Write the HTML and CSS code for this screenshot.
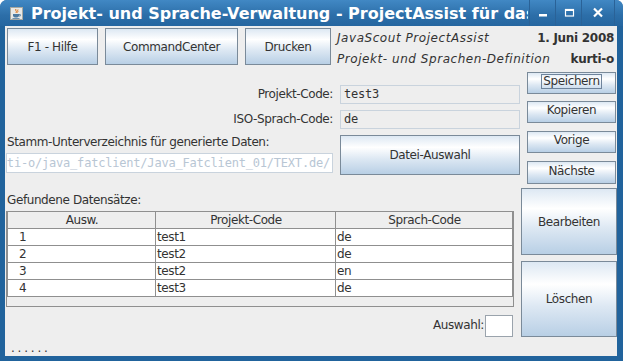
FILE: index.html
```html
<!DOCTYPE html>
<html lang="de">

<head>
  <meta charset="UTF-8" />
  <title>Projekt- und Sprache-Verwaltung</title>
  <link rel="stylesheet" href="styles.css">
</head>

<body>
  <div class="window">
    <div class="titlebar">
      <svg class="app-icon" width="13" height="13" viewBox="0 0 13 13">
        <rect x="0.5" y="0.5" width="12" height="12" fill="#e9e9e6" stroke="#a8a8a0" />
        <path d="M6 2 C4.5 3.5 7.5 4 6 6 M8 2.5 C7 3.5 8.5 4 7.5 5.5" fill="none" stroke="#e07010" stroke-width="1" />
        <path d="M3 7 H9 V8.5 C9 10 7.5 10.5 6 10.5 C4.5 10.5 3 10 3 8.5 Z" fill="#4d7aa0" />
        <path d="M9 7.5 H10.3 V9 H9" fill="none" stroke="#4d7aa0" stroke-width="0.8" />
        <path d="M2.5 11.5 H9.5" stroke="#4d7aa0" stroke-width="0.8" />
      </svg>
      <div class="title">Projekt- und Sprache-Verwaltung - ProjectAssist für das Erstellen von Anwendungen</div>
      <div class="controls">
        <div class="ctl">
          <svg width="12" height="12" viewBox="0 0 12 12"><rect x="2" y="7" width="8" height="2.5" fill="#fff" /></svg>
        </div>
        <div class="ctl">
          <svg width="12" height="12" viewBox="0 0 12 12"><rect x="2.5" y="2.5" width="8" height="6.5" fill="none" stroke="#fff" stroke-width="1.2" /><rect x="2" y="2" width="9" height="2" fill="#fff" /></svg>
        </div>
        <div class="ctl">
          <svg width="12" height="12" viewBox="0 0 12 12"><path d="M2 1.5 L10 9.5 M10 1.5 L2 9.5" stroke="#fff" stroke-width="2.2" /></svg>
        </div>
      </div>
    </div>

    <div class="content">
      <div class="toolbar">
        <button class="btn btn-help">F1 - Hilfe</button>
        <button class="btn btn-cc">CommandCenter</button>
        <button class="btn btn-print">Drucken</button>
        <div class="info">
          <div class="info-line"><span class="app">JavaScout ProjectAssist</span><b>1. Juni 2008</b></div>
          <div class="info-line"><span class="app">Projekt- und Sprachen-Definition</span><b>kurti-o</b></div>
        </div>
      </div>

      <div class="body">
        <div class="main">
          <div class="field-row first">
            <label class="field-label">Projekt-Code:</label>
            <div class="field readonly">test3</div>
          </div>
          <div class="field-row">
            <label class="field-label">ISO-Sprach-Code:</label>
            <div class="field readonly">de</div>
          </div>
          <div class="file-row">
            <div class="dir">
              <label class="dir-label">Stamm-Unterverzeichnis für generierte Daten:</label>
              <div class="field dir-field"><span>/home/kurti-o/java_fatclient/Java_Fatclient_01/TEXT.de/</span></div>
            </div>
            <button class="btn btn-file">Datei-Auswahl</button>
          </div>
          <div class="list-label">Gefundene Datensätze:</div>
          <div class="table-scroll">
            <table class="records">
              <thead>
                <tr><th>Ausw.</th><th>Projekt-Code</th><th>Sprach-Code</th></tr>
              </thead>
              <tbody>
                <tr><td class="num">1</td><td>test1</td><td>de</td></tr>
                <tr><td class="num">2</td><td>test2</td><td>de</td></tr>
                <tr><td class="num">3</td><td>test2</td><td>en</td></tr>
                <tr><td class="num">4</td><td>test3</td><td>de</td></tr>
              </tbody>
            </table>
          </div>
          <div class="select-row">
            <label>Auswahl:</label>
            <div class="select-field"></div>
          </div>
        </div>

        <div class="side">
          <button class="btn side-btn save"><span class="focus">Speichern</span></button>
          <button class="btn side-btn copy">Kopieren</button>
          <button class="btn side-btn prev">Vorige</button>
          <button class="btn side-btn next">Nächste</button>
          <button class="btn big-btn edit">Bearbeiten</button>
          <button class="btn big-btn delete">Löschen</button>
        </div>
      </div>

      <div class="status">......</div>
    </div>
  </div>
</body>

</html>
```

FILE: styles.css
```css
body {
  margin: 0;
  background-color: #ffffff;
  font-family: "DejaVu Sans", Verdana, sans-serif;
  font-size: 12px;
  letter-spacing: -0.4px;
  color: #333333;
}

.window {
  width: 623px;
  height: 361px;
  box-sizing: border-box;
  padding: 0 6px 5px 5px;
  display: flex;
  flex-direction: column;
  background-color: #21639c;
  border-radius: 7px 7px 0 0;
  overflow: hidden;
}

/* Title bar */
.titlebar {
  height: 26px;
  margin: 0 -6px 0 -5px;
  display: flex;
  align-items: center;
  background: linear-gradient(#4188c4, #2c6ea8 60%, #2566a0);
  color: #ffffff;
}

.app-icon {
  margin-left: 10px;
  flex: none;
}

.title {
  margin-left: 8px;
  width: 497px;
  overflow: hidden;
  white-space: nowrap;
  font-weight: bold;
  font-size: 16px;
  letter-spacing: 0;
}

.controls {
  display: flex;
  height: 26px;
  margin-left: 1px;
}

.ctl {
  width: 25px;
  display: flex;
  align-items: center;
  justify-content: center;
  border-left: 1px solid #2a6297;
}

.ctl:last-child {
  width: 32px;
  border-right: 1px solid #2a6297;
}

/* Content */
.content {
  flex: 1;
  display: flex;
  flex-direction: column;
  background-color: #eeeeee;
}

.btn {
  font-family: "DejaVu Sans", Verdana, sans-serif;
  font-size: 12px;
  letter-spacing: -0.4px;
  color: #333333;
  padding: 0;
  box-sizing: border-box;
  border: 1px solid #7a8a99;
  background: linear-gradient(#dde8f3, #ffffff 30%, #dde8f3 60%, #b8cfe5);
}

.toolbar {
  display: flex;
  height: 37px;
  margin-top: 2px;
  padding-left: 2px;
}

.btn-help {
  width: 91px;
}

.btn-cc {
  width: 133px;
  margin-left: 7px;
}

.btn-print {
  width: 86px;
  margin-left: 7px;
}

.info {
  flex: 1;
  margin-left: 6px;
  margin-right: 3px;
  padding-top: 2px;
}

.info-line {
  display: flex;
  justify-content: space-between;
  height: 21px;
  line-height: 17px;
}

.info-line .app {
  font-style: italic;
  letter-spacing: 0.55px;
}

.info-line b {
  letter-spacing: -0.3px;
}

.body {
  display: flex;
  height: 272px;
  overflow: hidden;
}

.main {
  width: 515px;
  display: flex;
  flex-direction: column;
}

.field-row {
  display: flex;
  height: 19px;
  margin-top: 6px;
}

.field-row.first {
  margin-top: 20px;
}

.field-label {
  width: 328px;
  text-align: right;
  line-height: 19px;
}

.field {
  box-sizing: border-box;
  font-family: "DejaVu Sans Mono", monospace;
  font-size: 12px;
  letter-spacing: -0.2px;
  white-space: nowrap;
  overflow: hidden;
}

.field.readonly {
  width: 180px;
  margin-left: 7px;
  padding-left: 3px;
  line-height: 17px;
  border: 1px solid #c9d3dd;
  background-color: #eeeeee;
  color: #333333;
}

.file-row {
  display: flex;
  height: 40px;
  margin-top: 6px;
}

.dir {
  width: 335px;
  display: flex;
  flex-direction: column;
}

.dir-label {
  padding-left: 2px;
  line-height: 15px;
}

.dir-field {
  width: 327px;
  height: 20px;
  margin-top: 3px;
  margin-left: 1px;
  padding: 0 2px;
  display: flex;
  justify-content: flex-end;
  line-height: 18px;
  border: 1px solid #c9d3dd;
  background-color: #ffffff;
  color: #b8c6d4;
}

.btn-file {
  width: 180px;
  height: 40px;
}

.list-label {
  margin-top: 18px;
  padding-left: 2px;
  line-height: 15px;
}

.table-scroll {
  width: 508px;
  height: 100px;
  margin-top: 3px;
  margin-left: 1px;
  box-sizing: border-box;
  border: 1px solid #8f8f8f;
  background-color: #eeeeee;
}

.records {
  width: 506px;
  border-collapse: collapse;
  table-layout: fixed;
}

.records th,
.records td {
  height: 16px;
  padding: 0 0 0 1px;
  font-size: 12px;
  line-height: 14px;
  white-space: nowrap;
  border-left: 1px solid #8f8f8f;
  border-right: 1px solid #8f8f8f;
}

.records th:first-child,
.records td:first-child {
  width: 146px;
  border-left: 1px solid #8f8f8f;
}

.records th:nth-child(2),
.records td:nth-child(2) {
  width: 178px;
}

.records th {
  font-weight: normal;
  text-align: center;
  background-color: #eeeeee;
  border-bottom: 1px solid #8f8f8f;
}

.records td {
  text-align: left;
  background-color: #ffffff;
  border-bottom: 1px solid #8f8f8f;
}

.records td.num {
  padding-left: 11px;
}

.select-row {
  display: flex;
  justify-content: flex-end;
  margin-top: 8px;
  margin-right: 7px;
}

.select-row label {
  line-height: 20px;
  margin-right: 1px;
}

.select-field {
  width: 28px;
  height: 22px;
  box-sizing: border-box;
  border: 1px solid #9aa3ac;
  background-color: #ffffff;
}

.side {
  width: 96px;
  margin-left: 1px;
  display: flex;
  flex-direction: column;
}

.side-btn {
  width: 89px;
  height: 23px;
  margin-left: 6px;
  margin-top: 8px;
  line-height: 15px;
  padding-bottom: 3px;
}

.side-btn.save,
.side-btn.copy {
  margin-top: 7px;
}

.side-btn.next {
  height: 24px;
}

.focus {
  display: inline-block;
  padding: 0 1px;
  line-height: 13px;
  border: 1px solid #6f849c;
}

.big-btn {
  width: 96px;
  height: 70px;
  margin-top: 4px;
}

.big-btn.delete {
  height: 80px;
  margin-top: 6px;
}

.status {
  flex: 1;
  padding-left: 6px;
  padding-top: 5px;
  font-size: 12px;
  line-height: 12px;
  letter-spacing: 2.8px;
}
```
